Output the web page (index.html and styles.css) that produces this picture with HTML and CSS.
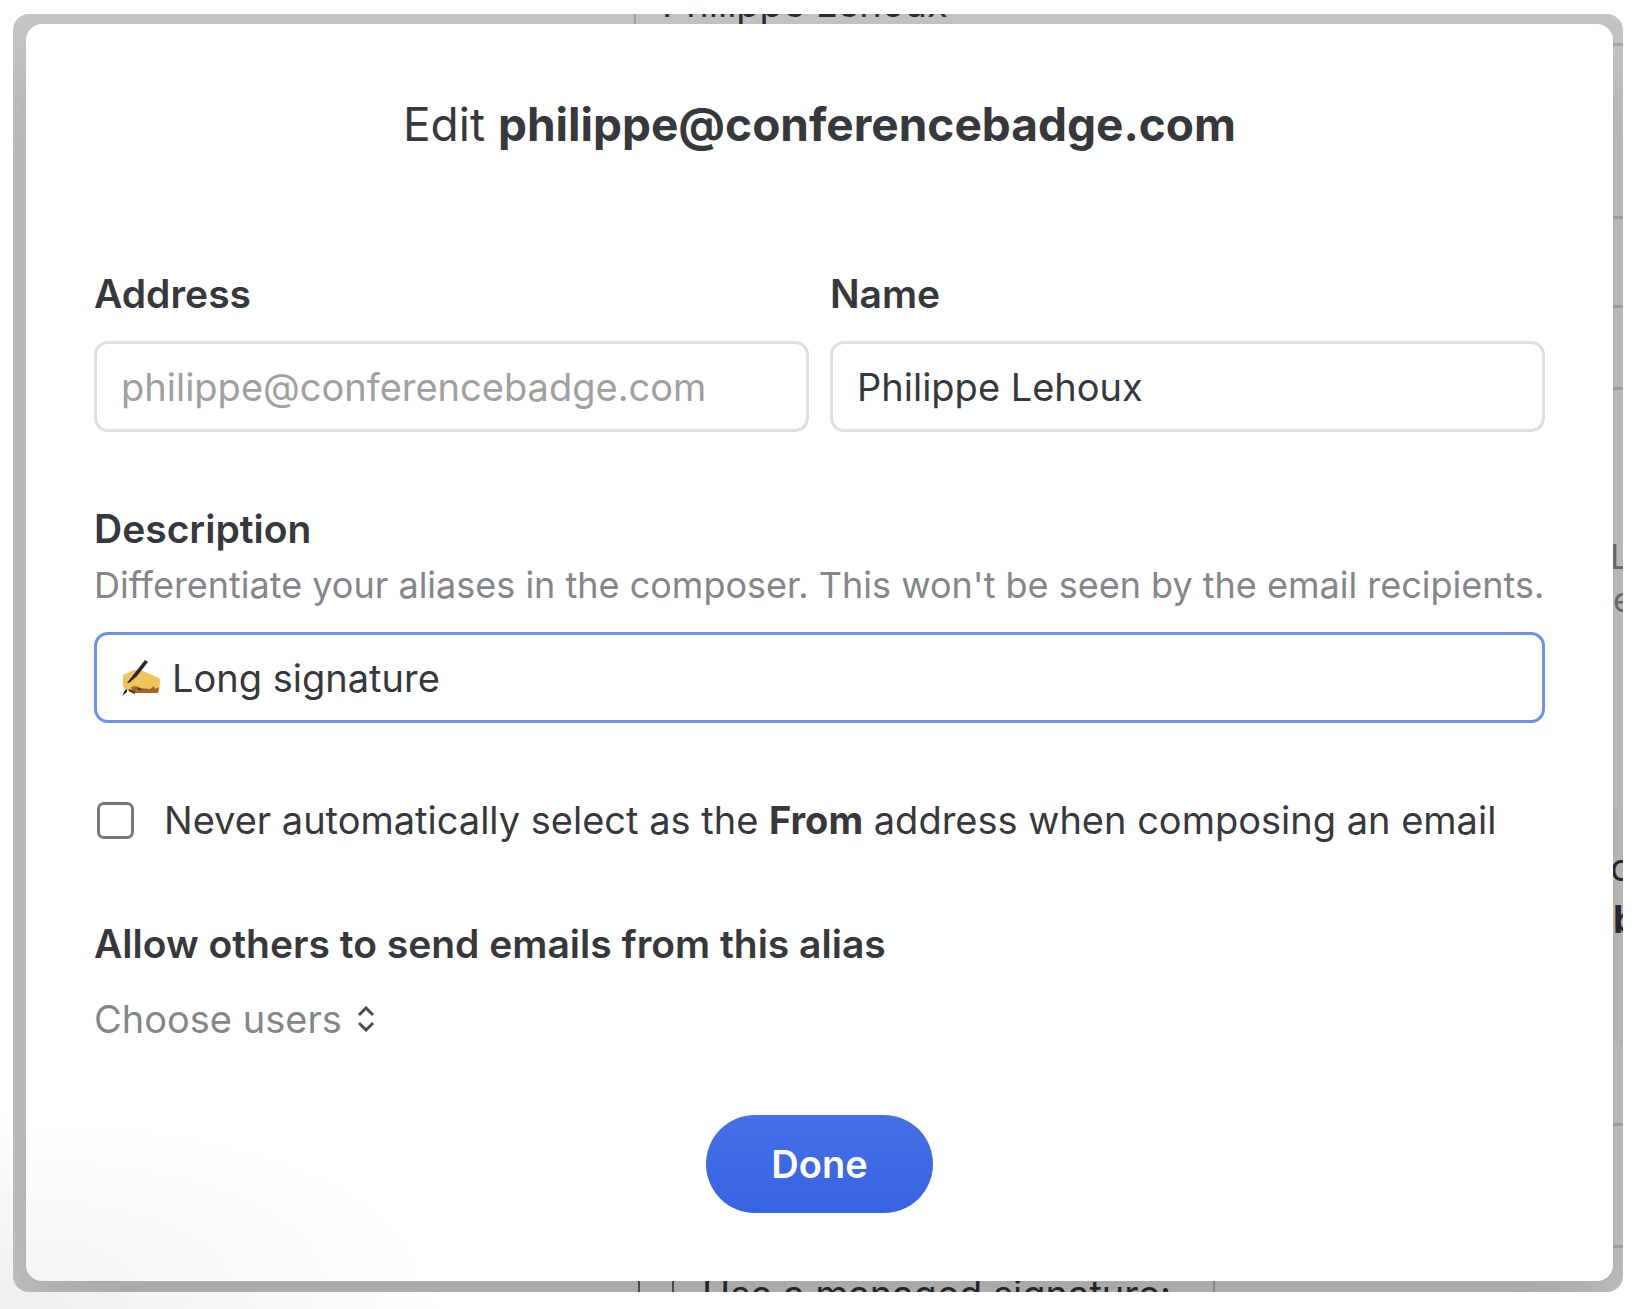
FILE: index.html
```html
<!DOCTYPE html>
<html lang="en">

<head>
    <meta charset="UTF-8">
    <meta name="viewport" content="width=device-width, initial-scale=1.0">
    <title>Edit alias</title>
    <link rel="stylesheet" href="styles.css">
</head>

<body>
    <div class="window">
        <!-- Settings page behind the modal -->
        <div class="page" aria-hidden="true">
            <div class="page-top">Philippe Lehoux</div>
            <div class="page-side">
                <div class="side-row row-1"></div>
                <div class="side-row row-2"></div>
                <div class="side-row row-3"></div>
                <div class="side-row row-4"></div>
                <div class="side-note">L<br>e</div>
                <div class="side-card">c<br><b>b</b></div>
                <div class="side-row row-5"></div>
                <div class="side-row row-6"></div>
            </div>
            <div class="page-bottom">
                <span class="page-check"></span>
                <span class="page-option">Use a managed signature:</span>
            </div>
        </div>

        <form class="modal">
            <h1>Edit <strong>philippe@conferencebadge.com</strong></h1>

            <div class="columns">
                <div class="field">
                    <label for="address">Address</label>
                    <div class="box"><input type="email" id="address" placeholder="philippe@conferencebadge.com"></div>
                </div>
                <div class="field">
                    <label for="name">Name</label>
                    <div class="box"><input type="text" id="name" value="Philippe Lehoux"></div>
                </div>
            </div>

            <div class="field description">
                <label for="description">Description</label>
                <p class="hint">Differentiate your aliases in the composer. This won't be seen by the email recipients.</p>
                <div class="box active">
                    <svg class="hand" viewBox="0 0 40 38" aria-hidden="true">
                        <path d="M2 16 L13 11 L20 11 L38 19 Q39 20 39 23 L38 32 Q37 34 34 34 L12 34 Q4 31 2 27 Z" fill="#f0c45c"/>
                        <path d="M10 28 Q16 26 19 29 L29 30 L33 27 L34 30 L38 28 L37 34 L12 34 Z" fill="#a2652a"/>
                        <path d="M8 31 L14 34 M17 29 L20 31" stroke="#4c3a2c" stroke-width="2"/>
                        <path d="M6 24 L9 20 L24 1 L27 3 L16 17 L8 24 Z" fill="#26282d"/>
                        <path d="M1 37 L4 31 L6 30 L6 33 Z" fill="#26282d"/>
                    </svg>
                    <input type="text" id="description" value="Long signature">
                </div>
            </div>

            <div class="check">
                <input type="checkbox" id="never">
                <label for="never">Never automatically select as the <strong>From</strong> address when composing an email</label>
            </div>

            <div class="share">
                <label for="users">Allow others to send emails from this alias</label>
                <div class="picker">
                    <select id="users">
                        <option>Choose users</option>
                    </select>
                    <svg class="arrows" viewBox="0 0 18 26" aria-hidden="true">
                        <path d="M2 9 L9 2 L16 9 M2 17 L9 24 L16 17"/>
                    </svg>
                </div>
            </div>

            <button type="button" class="done-btn">Done</button>
        </form>
    </div>
</body>

</html>
```
FILE: styles.css
```css
/* General Styles */

* {
    box-sizing: border-box;
}

body {
    display: flex;
    min-height: 100vh;
    margin: 0;
    padding: 14px 12px 17px 13px;
    background: radial-gradient(ellipse 440px 200px at 0 100%, #eeeeee, #ffffff);
    font-family: Inter, "Liberation Sans", sans-serif;
    font-size: 38px;
    line-height: 48px;
    color: #37383c;
}

.window {
    position: relative;
    display: flex;
    flex: 1;
    overflow: hidden;
    border-radius: 16px;
    background: #c6c6c6;
}

/* Page behind the modal */

.page {
    position: absolute;
    inset: 0;
    overflow: hidden;
    color: #2b2b30;
}

.page-top {
    position: absolute;
    top: -35px;
    left: 621px;
    padding-left: 26px;
    border-left: 2px solid #a6a6a8;
}

.page-side {
    position: absolute;
    top: 0;
    right: 0;
    width: 10px;
    height: 100%;
}

.side-row {
    border-bottom: 3px solid #a9a9ab;
}

.row-1 {
    height: 32px;
}

.row-2 {
    height: 173px;
}

.row-3 {
    height: 89px;
}

.row-4 {
    height: 82px;
}

.side-note {
    height: 418px;
    padding-top: 145px;
    font-size: 34px;
    line-height: 43px;
    color: #6f6f72;
    text-indent: -3px;
}

.side-card {
    height: 236px;
    padding-top: 33px;
    background: rgba(0, 0, 0, 0.02);
    line-height: 52px;
    text-indent: -3px;
}

.row-5 {
    height: 82px;
}

.row-6 {
    height: 122px;
}

.page-bottom {
    position: absolute;
    bottom: -26px;
    left: 625px;
    display: flex;
    gap: 28px;
    width: 577px;
    border-right: 2px solid #9c9c9e;
}

.page-check {
    width: 36px;
    border: 2px solid #55565a;
    border-top: 0;
}

.page-option {
    white-space: nowrap;
}

/* Modal */

.modal {
    position: relative;
    display: flex;
    flex: 1;
    flex-direction: column;
    margin: 10px 10px 11px 13px;
    padding: 71px 68px 67px;
    border-radius: 16px;
    background: radial-gradient(ellipse 400px 160px at 0 100%, #f5f5f5, #ffffff);
    box-shadow: 0 40px 80px rgba(0, 0, 0, 0.17);
}

h1 {
    margin: 0;
    font-size: 46px;
    font-weight: 400;
    line-height: 58px;
    text-align: center;
}

strong {
    font-weight: 700;
}

.columns {
    display: flex;
    gap: 21px;
    margin-top: 117px;
}

.field {
    display: flex;
    flex: 1;
    flex-direction: column;
}

.field label,
.share label {
    font-size: 39px;
    font-weight: 600;
}

.box {
    display: flex;
    align-items: center;
    gap: 11px;
    height: 91px;
    margin-top: 23px;
    padding: 0 24px;
    border: 3px solid #dfdfdf;
    border-radius: 14px;
    background: #fff;
}

.box.active {
    border-color: #6a92ee;
}

.box input {
    flex: 1;
    min-width: 0;
    padding: 0;
    border: none;
    outline: none;
    background: none;
    font: inherit;
    color: inherit;
}

.box input::placeholder {
    color: #a0a0a0;
    opacity: 1;
}

.hand {
    width: 40px;
    height: 38px;
}

.description {
    flex: none;
    margin-top: 73px;
}

.hint {
    margin: 8px 0 0;
    font-size: 36px;
    color: #85868a;
    white-space: nowrap;
}

.check {
    display: flex;
    align-items: center;
    gap: 30px;
    margin-top: 73px;
    padding-left: 3px;
    white-space: nowrap;
}

.check input {
    appearance: none;
    width: 37px;
    height: 37px;
    margin: 0;
    border: 3px solid #77787b;
    border-radius: 7px;
    background: #fff;
}

.share {
    display: flex;
    flex-direction: column;
    gap: 27px;
    margin-top: 76px;
}

.picker {
    display: flex;
    align-items: center;
    gap: 15px;
}

.picker select {
    appearance: none;
    padding: 0;
    border: none;
    background: none;
    font: inherit;
    color: #85868a;
}

.arrows {
    width: 18px;
    height: 26px;
    fill: none;
    stroke: #4b4c50;
    stroke-width: 3;
}

.done-btn {
    align-self: center;
    margin-top: 72px;
    padding: 25px 65px;
    border: none;
    border-radius: 50px;
    background: linear-gradient(#4570e6, #3663e3);
    font: inherit;
    font-weight: 600;
    color: #fff;
    cursor: pointer;
}
```
